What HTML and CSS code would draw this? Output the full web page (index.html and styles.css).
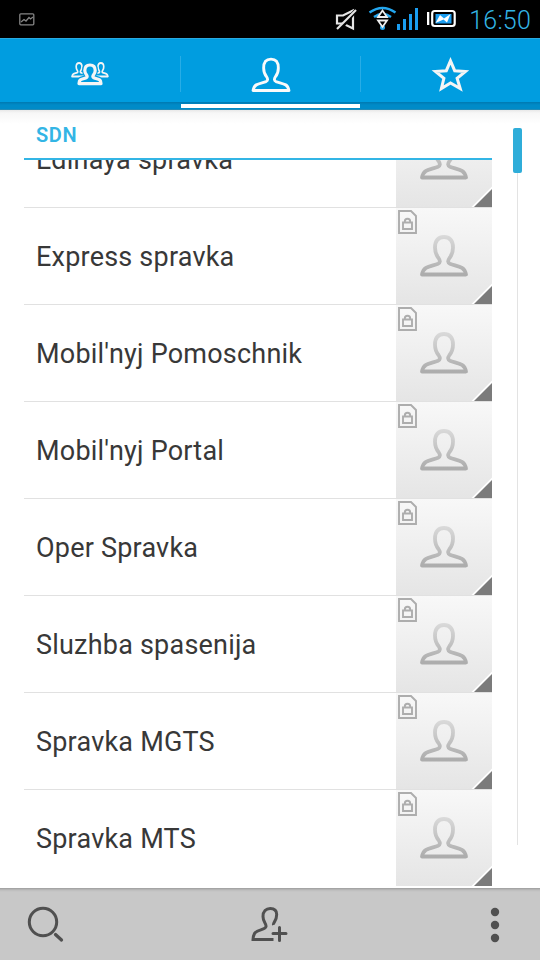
FILE: index.html
```
<!DOCTYPE html>
<html lang="en">
<head>
<meta charset="utf-8">
<title>Contacts</title>
<link rel="stylesheet" href="styles.css">
</head>
<body>
<svg class="defs" width="0" height="0">
  <defs>
    <linearGradient id="fade" gradientUnits="userSpaceOnUse" x1="0" y1="27" x2="0" y2="66">
      <stop offset="0" stop-color="#dadada"/><stop offset="1" stop-color="#adadad"/>
    </linearGradient>
    <path id="person" d="M48 29C53.500 29 57 32.500 57 39.500C57 45 55.500 47.500 53.500 50C51.500 52.800 51.800 54.800 54 55.800C58 57.300 63 58 66 59.800C68.500 61.300 69.500 64 70 66.500H26C26.500 64 27.500 61.300 30 59.800C33 58 38 57.300 42 55.800C44.200 54.800 44.500 52.800 42.500 50C40.500 47.500 39 45 39 39.500C39 32.500 42.500 29 48 29Z"/>
    <path id="member" d="M90 65C93.800 65 95.200 67.300 95.200 70.500C95.200 73 94.200 74 93.300 75.200C92.500 76.400 92.700 77.300 93.800 77.800C96 78.800 98.500 78.900 99.800 80C100.700 80.900 100.900 82.500 101 83.600H79C79.100 82.500 79.300 80.900 80.200 80C81.500 78.900 84 78.800 86.200 77.800C87.300 77.300 87.500 76.400 86.700 75.200C85.800 74 84.800 73 84.800 70.500C84.800 67.300 86.200 65 90 65Z"/>
    <symbol id="avatar" viewBox="0 0 96 96">
      <use href="#person" fill="none" stroke="url(#fade)" stroke-width="3.800" stroke-linejoin="round"/>
      <path d="M75.500 96L96 75.500V96Z" fill="#fff"/>
      <path d="M78 96L96 78V96Z" fill="#7b7b7b"/>
      <g fill="none" stroke="#adadad" stroke-width="1.900">
        <path d="M3 3H15L20 8V25H3Z"/>
        <path d="M7 14.500H16V21H7Z M8.800 14.500V13.500C8.800 9.800 14.200 9.800 14.200 13.500V14.500"/>
      </g>
    </symbol>
  </defs>
</svg>
<div class="phone">
  <header class="status">
    <svg class="picture-icon" width="16" height="13" viewBox="0 0 16 13" fill="none" stroke="#858585" stroke-width="1.300"><rect x=".8" y=".8" width="14" height="11" rx="1"/><path d="M2 9L5 6.500L7 8L10 4.500L11.500 6L14 4"/></svg>
    <svg class="status-icons" width="126" height="38" viewBox="330 0 126 38">
      <g fill="none" stroke="#e4e4e4" stroke-width="2.200"><path d="M337 15.500H343L353 10.500V28.500L343 23.500H337Z"/><path d="M339 30L357 9" stroke="#000" stroke-width="4"/><path d="M337 29L356 10"/></g>
      <g fill="none" stroke="#23a6ee" stroke-width="2.400"><path d="M369.500 12.500Q382.500 3.500 395.500 12.500"/><path d="M374 17Q382.500 11 391 17"/></g>
      <circle cx="382.500" cy="27.500" r="2.500" fill="#23a6ee"/>
      <g fill="#000" stroke="#eee" stroke-width="1.800"><path d="M378 17L382.500 10.500L387 17Z"/><path d="M378 20.500H387L382.500 27Z"/></g>
      <g fill="#1a9df0"><rect x="397" y="24" width="3" height="6"/><rect x="403" y="19" width="3" height="11"/><rect x="409" y="14" width="3" height="16"/><rect x="415" y="8" width="3" height="22"/></g>
      <path d="M427 12H429.300V25H427Z" fill="#fff"/><rect x="432.200" y="11" width="22.500" height="15" rx="2.500" fill="none" stroke="#fff" stroke-width="2.200"/>
      <path d="M435.500 14H451.500V23.500H435.500Z" fill="#1a9df0"/><path d="M435.500 23L440 15L444 18.500L450.500 14L447 22.500L443.500 19.500Z" fill="#fff"/>
    </svg>
    <span class="clock">16:50</span>
  </header>
  <nav class="tabs">
    <a class="tab"><svg width="38" height="26" viewBox="71 61 38 26" fill="none" stroke="#f5f5f5" stroke-linejoin="round">
      <use href="#person" transform="translate(63.700 52.500) scale(.32 .36)" stroke-width="5.200"/>
      <use href="#person" transform="translate(85.500 52.500) scale(.32 .36)" stroke-width="5.200"/>
      <use href="#member" stroke="#009de0" stroke-width="5.500" fill="#009de0"/>
      <use href="#member" stroke-width="3.200"/>
    </svg></a>
    <a class="tab active"><svg width="40" height="36" viewBox="23.500 26.500 49 43" preserveAspectRatio="none" fill="none" stroke="#fafafa" stroke-width="3.500" stroke-linejoin="round"><use href="#person"/></svg></a>
    <a class="tab"><svg width="38" height="36" viewBox="0 0 38 36" fill="none" stroke="#f5f5f5" stroke-width="3"><path d="M19.500 3.800L23.700 13.700L34.500 14.500L26.100 21.300L29.200 31.500L19.500 26L10.400 31.500L12.900 21.300L4.500 14.500L15.300 13.700Z"/></svg></a>
  </nav>
  <main class="content">
    <section class="contacts">
      <h2 class="group">SDN</h2>
      <div class="list">
        <div class="row"><span class="name">Edinaya spravka</span><svg class="photo"><use href="#avatar"/></svg></div>
        <div class="row"><span class="name">Express spravka</span><svg class="photo"><use href="#avatar"/></svg></div>
        <div class="row"><span class="name">Mobil'nyj Pomoschnik</span><svg class="photo"><use href="#avatar"/></svg></div>
        <div class="row"><span class="name">Mobil'nyj Portal</span><svg class="photo"><use href="#avatar"/></svg></div>
        <div class="row"><span class="name">Oper Spravka</span><svg class="photo"><use href="#avatar"/></svg></div>
        <div class="row"><span class="name">Sluzhba spasenija</span><svg class="photo"><use href="#avatar"/></svg></div>
        <div class="row"><span class="name">Spravka MGTS</span><svg class="photo"><use href="#avatar"/></svg></div>
        <div class="row"><span class="name">Spravka MTS</span><svg class="photo"><use href="#avatar"/></svg></div>
      </div>
    </section>
    <div class="scroll"><div class="thumb"></div></div>
  </main>
  <footer class="actions">
    <svg width="40" height="40" viewBox="0 0 40 40" fill="none" stroke="#505050" stroke-width="3"><circle cx="18" cy="17" r="13.700"/><path d="M30.500 29.500L36.500 35" stroke-width="3.300" stroke-linecap="round"/></svg>
    <svg class="add" width="40" height="40" viewBox="0 0 40 40" fill="none" stroke="#505050" stroke-width="3"><path d="M24.500 20C23.800 17.500 27.700 16 27.700 9.500C27.700 5.500 25 3.500 21.200 3.500C17 3.500 14 6.500 14 11.500C14 17.500 17.500 18.500 17 21.500C16.500 25 7.500 24.500 5.500 28.500C4.500 30.500 4 33.500 4 34.500H24.500"/><path d="M30.500 22.500V35.500M24 28.500H37" stroke-linecap="round"/></svg>
    <svg class="more" width="10" height="40" viewBox="0 0 10 40" fill="#505050"><circle cx="5" cy="7" r="4.200"/><circle cx="5" cy="20" r="4.200"/><circle cx="5" cy="33" r="4.200"/></svg>
  </footer>
</div>
</body>
</html>
```
FILE: styles.css
```
* { box-sizing: border-box; }
body { margin: 0; font-family: Roboto, sans-serif; background: #fff; }
svg { display: block; flex: none; }
.defs { position: absolute; }
.phone { width: 540px; height: 960px; display: flex; flex-direction: column; overflow: hidden; }
.status { height: 38px; flex: none; background: #000; display: flex; align-items: center; padding: 0 9px 0 19px; }
.status-icons { margin-left: auto; }
.clock { width: 75px; text-align: right; color: #33b5e5; font-size: 25px; font-weight: 300; letter-spacing: .2px; line-height: 36px; padding-top: 3px; white-space: nowrap; }
.tabs { height: 72px; flex: none; display: flex; border-top: 1px solid #29aae1; background: linear-gradient(#009de0 63px, #0079b1 63px, #008bc8 66px, #008bc8 70px, #458ca8 71px); }
.tab { flex: 1; display: flex; justify-content: center; align-items: flex-start; padding-top: 18px; position: relative; }
.tab:first-child { padding-top: 22px; }
.active { padding-left: 1px; }
.tab + .tab::before { content: ""; position: absolute; left: 0; top: 17px; width: 1px; height: 36px; background: #28ade6; }
.active::after { content: ""; position: absolute; left: 1px; right: 0; top: 65px; height: 4px; background: #fff; }
.content { height: 778px; flex: none; display: flex; background: linear-gradient(#e8e8e8, #f7f7f7 3px, #fff 14px); }
.contacts { width: 468px; margin-left: 24px; height: 778px; }
.group { height: 50px; margin: 0; padding: 0 12px; border-bottom: 2px solid #33b5e5; color: #33b5e5; font-size: 20px; font-weight: 600; letter-spacing: .6px; line-height: 50px; }
.list { height: 727px; overflow: hidden; display: flex; flex-direction: column; justify-content: flex-end; padding-bottom: 1px; }
.row { height: 97px; flex: none; display: flex; justify-content: space-between; align-items: center; padding-left: 12px; border-top: 1px solid #e1e1e1; }
.name { color: #383838; font-size: 27px; letter-spacing: .21px; line-height: 32px; padding-top: 2px; white-space: nowrap; }
.photo { width: 96px; height: 96px; background: linear-gradient(#f8f8f8, #e5e5e5); }
.scroll { width: 9px; margin: 18px 0 0 21px; height: 717px; background: linear-gradient(90deg, transparent 4px, #e3e3e3 4px, #e3e3e3 5px, transparent 5px); }
.thumb { height: 45px; border-radius: 2px; background: #2fadd9; }
.actions { height: 72px; flex: none; display: flex; align-items: flex-start; padding: 17px 40px 0 25px; background: linear-gradient(#9c9c9c, #bcbcbc 2px, #c8c8c8 4px); }
.add { margin-left: 184px; }
.more { margin-left: auto; }
```
